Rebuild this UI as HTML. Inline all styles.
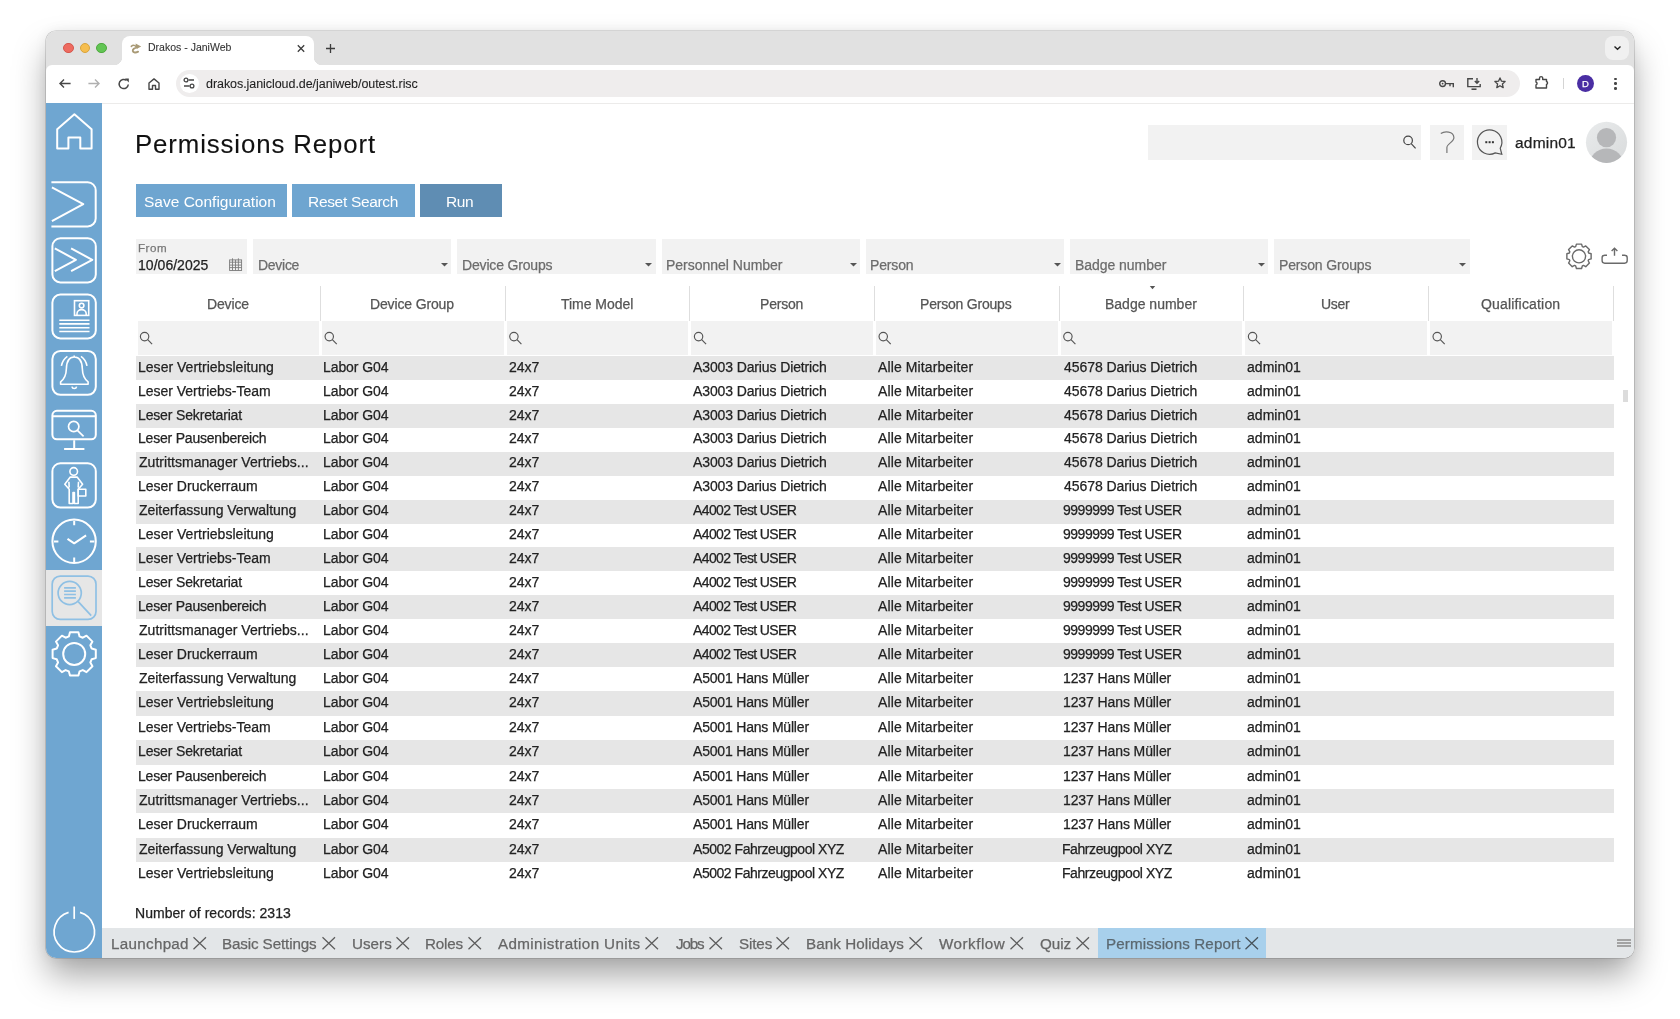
<!DOCTYPE html>
<html><head><meta charset="utf-8"><title>Permissions Report</title>
<style>
*{box-sizing:border-box;margin:0;padding:0}
html,body{width:1680px;height:1019px;overflow:hidden;background:#fff;font-family:"Liberation Sans",sans-serif}
#win{position:absolute;left:46px;top:30.5px;width:1588px;height:927.5px;border-radius:10px;overflow:hidden;background:#fff;
 box-shadow:0 0 0 0.6px rgba(0,0,0,0.22),0 19px 34px -2px rgba(0,0,0,0.36),0 0 14px rgba(0,0,0,0.06)}
#pg{position:absolute;left:-46px;top:-30.5px;width:1680px;height:1019px}
.b{position:absolute}
.t{position:absolute;white-space:nowrap;line-height:1;will-change:transform;-webkit-text-stroke:0.25px currentColor}
svg{position:absolute;overflow:visible}
</style></head>
<body>
<div id="win"><div id="pg">
<div class="b" style="left:0.00px;top:0.00px;width:1680.00px;height:72.00px;background:#e1e1e1"></div><div class="b" style="left:121.70px;top:36.00px;width:192.60px;height:28.50px;background:#fff;border-radius:8px 8px 0 0"></div><div class="b" style="left:113.70px;top:56.50px;width:8.00px;height:8.00px;background:radial-gradient(circle at 0 0,transparent 8px,#fff 8.5px)"></div><div class="b" style="left:314.30px;top:56.50px;width:8.00px;height:8.00px;background:radial-gradient(circle at 100% 0,transparent 8px,#fff 8.5px)"></div><div class="b" style="left:63.30px;top:42.50px;width:10.40px;height:10.40px;background:#ee6b60;border-radius:50%;border:0.6px solid #d5574d"></div><div class="b" style="left:79.70px;top:42.50px;width:10.40px;height:10.40px;background:#f6be4f;border-radius:50%;border:0.6px solid #d9a43c"></div><div class="b" style="left:96.40px;top:42.50px;width:10.40px;height:10.40px;background:#62c554;border-radius:50%;border:0.6px solid #4fa93f"></div><div class="t" style="left:147.90px;top:42.10px;font-size:10.5px;color:#333;letter-spacing:0.007px;-webkit-text-stroke:0.1px currentColor">Drakos - JaniWeb</div><svg style="left:0;top:0" width="1680" height="100" viewBox="0 0 1680 100"><g fill="none" stroke="#a99a76" stroke-linecap="round"><path stroke-width="1.5" d="M131.3 46.4 C132.6 45.1 134.6 45.1 136.2 46.6"/><path stroke-width="1.9" d="M137.3 47.6 C134.2 47.7 132.5 49.5 132.8 51.1 C133.2 52.7 135.9 52.9 138.1 51.7"/></g><path fill="#a99a76" d="M135.6 43.6 L141.2 46.6 L137.4 48.6 L135.8 46.8 Z"/></svg><svg style="left:297px;top:45px" width="8" height="7" viewBox="0 0 8 7"><path d="M0.8 0.3 L7.2 6.7 M7.2 0.3 L0.8 6.7" stroke="#3c3c3c" stroke-width="1.3"/></svg><svg style="left:326.4px;top:43.9px" width="9" height="9" viewBox="0 0 9 9"><path d="M4.5 0 V9 M0 4.5 H9" stroke="#3c3c3c" stroke-width="1.3"/></svg><div class="b" style="left:1605.30px;top:36.20px;width:23.40px;height:23.60px;background:#f0f0f0;border-radius:8px"></div><svg style="left:1613.5px;top:45.6px" width="7" height="4" viewBox="0 0 7 4"><path d="M0.5 0.5 L3.5 3.3 L6.5 0.5" fill="none" stroke="#222" stroke-width="1.4"/></svg><div class="b" style="left:46.00px;top:64.50px;width:1588.00px;height:38.00px;background:#fff;border-radius:6px 6px 0 0"></div><div class="b" style="left:0.00px;top:102.50px;width:1680.00px;height:0.90px;background:#ecebea"></div><svg style="left:58.8px;top:79.4px" width="12" height="9" viewBox="0 0 12 9"><path d="M11.6 4.5 H1 M5 0.6 L1 4.5 L5 8.4" fill="none" stroke="#474747" stroke-width="1.4"/></svg><svg style="left:88px;top:79.4px" width="12" height="9" viewBox="0 0 12 9"><path d="M0.4 4.5 H11 M7 0.6 L11 4.5 L7 8.4" fill="none" stroke="#b0b0b0" stroke-width="1.4"/></svg><svg style="left:118.4px;top:78px" width="12" height="12" viewBox="0 0 12 12"><path d="M10.3 6.5 A4.6 4.6 0 1 1 8.6 2.4" fill="none" stroke="#474747" stroke-width="1.5"/><path d="M7 0.6 H10.8 V4.4 Z" fill="#474747"/></svg><svg style="left:148px;top:77.5px" width="12" height="12" viewBox="0 0 12 12"><path d="M1 11.3 V5 L6 0.9 L11 5 V11.3 H7.5 V7.5 H4.5 V11.3 Z" fill="none" stroke="#474747" stroke-width="1.4" stroke-linejoin="round"/></svg><div class="b" style="left:175.50px;top:69.60px;width:1344.00px;height:27.90px;background:#efeded;border-radius:14px"></div><div class="b" style="left:179.50px;top:73.60px;width:19.00px;height:19.00px;background:#fff;border-radius:50%"></div><svg style="left:183px;top:77px" width="12" height="12" viewBox="0 0 12 12"><path d="M5.5 3 H11 M1 9 H6.5" stroke="#474747" stroke-width="1.4"/><circle cx="3" cy="3" r="1.9" fill="none" stroke="#474747" stroke-width="1.3"/><circle cx="9" cy="9" r="1.9" fill="none" stroke="#474747" stroke-width="1.3"/></svg><div class="t" style="left:206.20px;top:78.00px;font-size:12.5px;color:#1f1f1f;letter-spacing:-0.058px;-webkit-text-stroke:0.1px currentColor">drakos.janicloud.de/janiweb/outest.risc</div><svg style="left:1439.4px;top:80px" width="15" height="8" viewBox="0 0 15 8"><circle cx="3.6" cy="3.6" r="2.9" fill="none" stroke="#474747" stroke-width="1.4"/><circle cx="3.6" cy="3.6" r="0.9" fill="#474747"/><path d="M6.5 3.6 H14.3 V7.3 M11 3.6 V6.3" fill="none" stroke="#474747" stroke-width="1.4"/></svg><svg style="left:1466.9px;top:77.5px" width="14" height="12" viewBox="0 0 14 12"><path d="M6 0.8 H0.8 V8.6 H13.2 V6" fill="none" stroke="#474747" stroke-width="1.4"/><path d="M4.5 11.2 H9.5" stroke="#474747" stroke-width="1.6"/><path d="M10 0 V5 M7.8 3 L10 5.2 L12.2 3" fill="none" stroke="#474747" stroke-width="1.4"/></svg><svg style="left:1494px;top:77.3px" width="12" height="12" viewBox="0 0 12 12"><path d="M6 0.9 L7.5 4.2 L11.1 4.5 L8.4 6.9 L9.2 10.6 L6 8.7 L2.8 10.6 L3.6 6.9 L0.9 4.5 L4.5 4.2 Z" fill="none" stroke="#474747" stroke-width="1.3" stroke-linejoin="round"/></svg><svg style="left:1535px;top:76.4px" width="15" height="13" viewBox="0 0 15 13"><path d="M1 3.5 H4.5 V2.2 A1.6 1.6 0 0 1 7.7 2.2 V3.5 H11.5 V5.5 A1.6 1.6 0 0 1 11.5 8.5 V12 H1 V9 A1.6 1.6 0 0 0 1 6 Z" fill="none" stroke="#474747" stroke-width="1.4" stroke-linejoin="round"/></svg><div class="b" style="left:1563.20px;top:77.70px;width:1.00px;height:11.80px;background:#d4d4d4"></div><div class="b" style="left:1577.30px;top:75.20px;width:16.80px;height:16.80px;background:#4a2ea3;border-radius:50%"></div><div class="t" style="left:1581.90px;top:78.60px;font-size:9.5px;color:#fff;">D</div><div class="b" style="left:1614.20px;top:77.55px;width:2.50px;height:2.50px;background:#474747;border-radius:50%"></div><div class="b" style="left:1614.20px;top:82.35px;width:2.50px;height:2.50px;background:#474747;border-radius:50%"></div><div class="b" style="left:1614.20px;top:87.05px;width:2.50px;height:2.50px;background:#474747;border-radius:50%"></div><div class="b" style="left:46.00px;top:103.30px;width:56.40px;height:854.70px;background:#6fa6d1"></div><div class="b" style="left:46.00px;top:570.00px;width:56.40px;height:55.80px;background:#e6e6e6"></div><div class="t" style="left:135.40px;top:131.80px;font-size:25.8px;color:#111;letter-spacing:0.882px;-webkit-text-stroke:0.1px currentColor">Permissions Report</div><div class="b" style="left:135.60px;top:184.00px;width:151.10px;height:33.20px;background:#6ea5d0"></div><div class="t" style="left:144.20px;top:194.30px;font-size:15.5px;color:#fff;-webkit-text-stroke:0">Save Configuration</div><div class="b" style="left:292.20px;top:184.00px;width:122.70px;height:33.20px;background:#6ea5d0"></div><div class="t" style="left:307.60px;top:194.30px;font-size:15.5px;color:#fff;letter-spacing:-0.318px;-webkit-text-stroke:0">Reset Search</div><div class="b" style="left:420.10px;top:184.00px;width:81.70px;height:33.20px;background:#5f8db3"></div><div class="t" style="left:446.10px;top:194.30px;font-size:15.5px;color:#fff;letter-spacing:-0.450px;-webkit-text-stroke:0">Run</div><div class="b" style="left:1148.20px;top:125.30px;width:272.60px;height:34.30px;background:#f2f2f2"></div><div class="b" style="left:1429.60px;top:125.30px;width:34.40px;height:34.30px;background:#f2f2f2"></div><div class="b" style="left:1472.40px;top:125.30px;width:34.60px;height:34.30px;background:#f2f2f2"></div><div class="t" style="left:1514.50px;top:135.40px;font-size:15.5px;color:#222;letter-spacing:0.200px;">admin01</div><div class="b" style="left:136.00px;top:239.00px;width:111.10px;height:34.60px;background:#f2f2f2"></div><div class="t" style="left:137.60px;top:242.00px;font-size:11.6px;color:#777;letter-spacing:0.500px;">From</div><div class="t" style="left:138.10px;top:257.70px;font-size:14px;color:#222;letter-spacing:0.033px;">10/06/2025</div><div class="b" style="left:253.10px;top:239.00px;width:198.40px;height:34.60px;background:#f2f2f2"></div><div class="t" style="left:257.60px;top:257.60px;font-size:14px;color:#6c6c6c;letter-spacing:-0.280px;">Device</div><svg style="left:441.20px;top:262.7px" width="7" height="4" viewBox="0 0 7 4"><path d="M0 0 H7 L3.5 3.5 Z" fill="#555"/></svg><div class="b" style="left:457.30px;top:239.00px;width:198.40px;height:34.60px;background:#f2f2f2"></div><div class="t" style="left:461.80px;top:257.60px;font-size:14px;color:#6c6c6c;letter-spacing:-0.167px;">Device Groups</div><svg style="left:645.40px;top:262.7px" width="7" height="4" viewBox="0 0 7 4"><path d="M0 0 H7 L3.5 3.5 Z" fill="#555"/></svg><div class="b" style="left:661.60px;top:239.00px;width:198.40px;height:34.60px;background:#f2f2f2"></div><div class="t" style="left:666.10px;top:257.60px;font-size:14px;color:#6c6c6c;letter-spacing:-0.013px;">Personnel Number</div><svg style="left:849.70px;top:262.7px" width="7" height="4" viewBox="0 0 7 4"><path d="M0 0 H7 L3.5 3.5 Z" fill="#555"/></svg><div class="b" style="left:865.80px;top:239.00px;width:198.40px;height:34.60px;background:#f2f2f2"></div><div class="t" style="left:870.30px;top:257.60px;font-size:14px;color:#6c6c6c;letter-spacing:-0.160px;">Person</div><svg style="left:1053.90px;top:262.7px" width="7" height="4" viewBox="0 0 7 4"><path d="M0 0 H7 L3.5 3.5 Z" fill="#555"/></svg><div class="b" style="left:1070.10px;top:239.00px;width:198.40px;height:34.60px;background:#f2f2f2"></div><div class="t" style="left:1074.60px;top:257.60px;font-size:14px;color:#6c6c6c;letter-spacing:-0.045px;">Badge number</div><svg style="left:1258.20px;top:262.7px" width="7" height="4" viewBox="0 0 7 4"><path d="M0 0 H7 L3.5 3.5 Z" fill="#555"/></svg><div class="b" style="left:1274.40px;top:239.00px;width:195.30px;height:34.60px;background:#f2f2f2"></div><div class="t" style="left:1278.90px;top:257.60px;font-size:14px;color:#6c6c6c;letter-spacing:-0.142px;">Person Groups</div><svg style="left:1459.40px;top:262.7px" width="7" height="4" viewBox="0 0 7 4"><path d="M0 0 H7 L3.5 3.5 Z" fill="#555"/></svg><div class="t" style="left:206.78px;top:296.70px;font-size:14px;color:#555;letter-spacing:-0.140px;">Device</div><div class="b" style="left:320.16px;top:286.00px;width:1.00px;height:35.00px;background:#dedede"></div><div class="b" style="left:137.50px;top:321.00px;width:181.66px;height:34.00px;background:#f2f2f2"></div><div class="t" style="left:370.39px;top:296.70px;font-size:14px;color:#555;letter-spacing:-0.145px;">Device Group</div><div class="b" style="left:504.82px;top:286.00px;width:1.00px;height:35.00px;background:#dedede"></div><div class="b" style="left:322.16px;top:321.00px;width:181.66px;height:34.00px;background:#f2f2f2"></div><div class="t" style="left:561.40px;top:296.70px;font-size:14px;color:#555;letter-spacing:-0.033px;">Time Model</div><div class="b" style="left:689.48px;top:286.00px;width:1.00px;height:35.00px;background:#dedede"></div><div class="b" style="left:506.82px;top:321.00px;width:181.66px;height:34.00px;background:#f2f2f2"></div><div class="t" style="left:759.91px;top:296.70px;font-size:14px;color:#555;letter-spacing:-0.200px;">Person</div><div class="b" style="left:874.14px;top:286.00px;width:1.00px;height:35.00px;background:#dedede"></div><div class="b" style="left:691.48px;top:321.00px;width:181.66px;height:34.00px;background:#f2f2f2"></div><div class="t" style="left:920.32px;top:296.70px;font-size:14px;color:#555;letter-spacing:-0.208px;">Person Groups</div><div class="b" style="left:1058.80px;top:286.00px;width:1.00px;height:35.00px;background:#dedede"></div><div class="b" style="left:876.14px;top:321.00px;width:181.66px;height:34.00px;background:#f2f2f2"></div><div class="t" style="left:1104.73px;top:296.70px;font-size:14px;color:#555;">Badge number</div><div class="b" style="left:1243.46px;top:286.00px;width:1.00px;height:35.00px;background:#dedede"></div><div class="b" style="left:1060.80px;top:321.00px;width:181.66px;height:34.00px;background:#f2f2f2"></div><div class="t" style="left:1320.89px;top:296.70px;font-size:14px;color:#555;letter-spacing:-0.333px;">User</div><div class="b" style="left:1428.12px;top:286.00px;width:1.00px;height:35.00px;background:#dedede"></div><div class="b" style="left:1245.46px;top:321.00px;width:181.66px;height:34.00px;background:#f2f2f2"></div><div class="t" style="left:1481.00px;top:296.70px;font-size:14px;color:#555;letter-spacing:0.175px;">Qualification</div><div class="b" style="left:1612.78px;top:286.00px;width:1.00px;height:35.00px;background:#dedede"></div><div class="b" style="left:1430.12px;top:321.00px;width:181.66px;height:34.00px;background:#f2f2f2"></div><div class="b" style="left:136.00px;top:355.80px;width:1478.00px;height:23.96px;background:#e6e6e6"></div><div class="t" style="left:138.40px;top:359.60px;font-size:14px;color:#222;letter-spacing:0.019px;">Leser Vertriebsleitung</div><div class="t" style="left:323.06px;top:359.60px;font-size:14px;color:#222;letter-spacing:-0.088px;">Labor G04</div><div class="t" style="left:508.52px;top:359.60px;font-size:14px;color:#222;">24x7</div><div class="t" style="left:693.38px;top:359.60px;font-size:14px;color:#222;letter-spacing:-0.120px;">A3003 Darius Dietrich</div><div class="t" style="left:878.04px;top:359.60px;font-size:14px;color:#222;letter-spacing:0.113px;">Alle Mitarbeiter</div><div class="t" style="left:1063.50px;top:359.60px;font-size:14px;color:#222;letter-spacing:-0.065px;">45678 Darius Dietrich</div><div class="t" style="left:1246.96px;top:359.60px;font-size:14px;color:#222;letter-spacing:0.033px;">admin01</div><div class="t" style="left:138.40px;top:383.56px;font-size:14px;color:#222;letter-spacing:-0.021px;">Leser Vertriebs-Team</div><div class="t" style="left:323.06px;top:383.56px;font-size:14px;color:#222;letter-spacing:-0.088px;">Labor G04</div><div class="t" style="left:508.52px;top:383.56px;font-size:14px;color:#222;">24x7</div><div class="t" style="left:693.38px;top:383.56px;font-size:14px;color:#222;letter-spacing:-0.120px;">A3003 Darius Dietrich</div><div class="t" style="left:878.04px;top:383.56px;font-size:14px;color:#222;letter-spacing:0.113px;">Alle Mitarbeiter</div><div class="t" style="left:1063.50px;top:383.56px;font-size:14px;color:#222;letter-spacing:-0.065px;">45678 Darius Dietrich</div><div class="t" style="left:1246.96px;top:383.56px;font-size:14px;color:#222;letter-spacing:0.033px;">admin01</div><div class="b" style="left:136.00px;top:403.72px;width:1478.00px;height:23.96px;background:#e6e6e6"></div><div class="t" style="left:138.40px;top:407.52px;font-size:14px;color:#222;letter-spacing:-0.156px;">Leser Sekretariat</div><div class="t" style="left:323.06px;top:407.52px;font-size:14px;color:#222;letter-spacing:-0.088px;">Labor G04</div><div class="t" style="left:508.52px;top:407.52px;font-size:14px;color:#222;">24x7</div><div class="t" style="left:693.38px;top:407.52px;font-size:14px;color:#222;letter-spacing:-0.120px;">A3003 Darius Dietrich</div><div class="t" style="left:878.04px;top:407.52px;font-size:14px;color:#222;letter-spacing:0.113px;">Alle Mitarbeiter</div><div class="t" style="left:1063.50px;top:407.52px;font-size:14px;color:#222;letter-spacing:-0.065px;">45678 Darius Dietrich</div><div class="t" style="left:1246.96px;top:407.52px;font-size:14px;color:#222;letter-spacing:0.033px;">admin01</div><div class="t" style="left:138.40px;top:431.48px;font-size:14px;color:#222;letter-spacing:-0.206px;">Leser Pausenbereich</div><div class="t" style="left:323.06px;top:431.48px;font-size:14px;color:#222;letter-spacing:-0.088px;">Labor G04</div><div class="t" style="left:508.52px;top:431.48px;font-size:14px;color:#222;">24x7</div><div class="t" style="left:693.38px;top:431.48px;font-size:14px;color:#222;letter-spacing:-0.120px;">A3003 Darius Dietrich</div><div class="t" style="left:878.04px;top:431.48px;font-size:14px;color:#222;letter-spacing:0.113px;">Alle Mitarbeiter</div><div class="t" style="left:1063.50px;top:431.48px;font-size:14px;color:#222;letter-spacing:-0.065px;">45678 Darius Dietrich</div><div class="t" style="left:1246.96px;top:431.48px;font-size:14px;color:#222;letter-spacing:0.033px;">admin01</div><div class="b" style="left:136.00px;top:451.64px;width:1478.00px;height:23.96px;background:#e6e6e6"></div><div class="t" style="left:139.40px;top:455.44px;font-size:14px;color:#222;letter-spacing:0.026px;">Zutrittsmanager Vertriebs...</div><div class="t" style="left:323.06px;top:455.44px;font-size:14px;color:#222;letter-spacing:-0.088px;">Labor G04</div><div class="t" style="left:508.52px;top:455.44px;font-size:14px;color:#222;">24x7</div><div class="t" style="left:693.38px;top:455.44px;font-size:14px;color:#222;letter-spacing:-0.120px;">A3003 Darius Dietrich</div><div class="t" style="left:878.04px;top:455.44px;font-size:14px;color:#222;letter-spacing:0.113px;">Alle Mitarbeiter</div><div class="t" style="left:1063.50px;top:455.44px;font-size:14px;color:#222;letter-spacing:-0.065px;">45678 Darius Dietrich</div><div class="t" style="left:1246.96px;top:455.44px;font-size:14px;color:#222;letter-spacing:0.033px;">admin01</div><div class="t" style="left:138.40px;top:479.40px;font-size:14px;color:#222;letter-spacing:-0.006px;">Leser Druckerraum</div><div class="t" style="left:323.06px;top:479.40px;font-size:14px;color:#222;letter-spacing:-0.088px;">Labor G04</div><div class="t" style="left:508.52px;top:479.40px;font-size:14px;color:#222;">24x7</div><div class="t" style="left:693.38px;top:479.40px;font-size:14px;color:#222;letter-spacing:-0.120px;">A3003 Darius Dietrich</div><div class="t" style="left:878.04px;top:479.40px;font-size:14px;color:#222;letter-spacing:0.113px;">Alle Mitarbeiter</div><div class="t" style="left:1063.50px;top:479.40px;font-size:14px;color:#222;letter-spacing:-0.065px;">45678 Darius Dietrich</div><div class="t" style="left:1246.96px;top:479.40px;font-size:14px;color:#222;letter-spacing:0.033px;">admin01</div><div class="b" style="left:136.00px;top:499.56px;width:1478.00px;height:23.96px;background:#e6e6e6"></div><div class="t" style="left:139.40px;top:503.36px;font-size:14px;color:#222;letter-spacing:-0.030px;">Zeiterfassung Verwaltung</div><div class="t" style="left:323.06px;top:503.36px;font-size:14px;color:#222;letter-spacing:-0.088px;">Labor G04</div><div class="t" style="left:508.52px;top:503.36px;font-size:14px;color:#222;">24x7</div><div class="t" style="left:693.38px;top:503.36px;font-size:14px;color:#222;letter-spacing:-0.621px;">A4002 Test USER</div><div class="t" style="left:878.04px;top:503.36px;font-size:14px;color:#222;letter-spacing:0.113px;">Alle Mitarbeiter</div><div class="t" style="left:1062.50px;top:503.36px;font-size:14px;color:#222;letter-spacing:-0.475px;">9999999 Test USER</div><div class="t" style="left:1246.96px;top:503.36px;font-size:14px;color:#222;letter-spacing:0.033px;">admin01</div><div class="t" style="left:138.40px;top:527.32px;font-size:14px;color:#222;letter-spacing:0.019px;">Leser Vertriebsleitung</div><div class="t" style="left:323.06px;top:527.32px;font-size:14px;color:#222;letter-spacing:-0.088px;">Labor G04</div><div class="t" style="left:508.52px;top:527.32px;font-size:14px;color:#222;">24x7</div><div class="t" style="left:693.38px;top:527.32px;font-size:14px;color:#222;letter-spacing:-0.621px;">A4002 Test USER</div><div class="t" style="left:878.04px;top:527.32px;font-size:14px;color:#222;letter-spacing:0.113px;">Alle Mitarbeiter</div><div class="t" style="left:1062.50px;top:527.32px;font-size:14px;color:#222;letter-spacing:-0.475px;">9999999 Test USER</div><div class="t" style="left:1246.96px;top:527.32px;font-size:14px;color:#222;letter-spacing:0.033px;">admin01</div><div class="b" style="left:136.00px;top:547.48px;width:1478.00px;height:23.96px;background:#e6e6e6"></div><div class="t" style="left:138.40px;top:551.28px;font-size:14px;color:#222;letter-spacing:-0.021px;">Leser Vertriebs-Team</div><div class="t" style="left:323.06px;top:551.28px;font-size:14px;color:#222;letter-spacing:-0.088px;">Labor G04</div><div class="t" style="left:508.52px;top:551.28px;font-size:14px;color:#222;">24x7</div><div class="t" style="left:693.38px;top:551.28px;font-size:14px;color:#222;letter-spacing:-0.621px;">A4002 Test USER</div><div class="t" style="left:878.04px;top:551.28px;font-size:14px;color:#222;letter-spacing:0.113px;">Alle Mitarbeiter</div><div class="t" style="left:1062.50px;top:551.28px;font-size:14px;color:#222;letter-spacing:-0.475px;">9999999 Test USER</div><div class="t" style="left:1246.96px;top:551.28px;font-size:14px;color:#222;letter-spacing:0.033px;">admin01</div><div class="t" style="left:138.40px;top:575.24px;font-size:14px;color:#222;letter-spacing:-0.156px;">Leser Sekretariat</div><div class="t" style="left:323.06px;top:575.24px;font-size:14px;color:#222;letter-spacing:-0.088px;">Labor G04</div><div class="t" style="left:508.52px;top:575.24px;font-size:14px;color:#222;">24x7</div><div class="t" style="left:693.38px;top:575.24px;font-size:14px;color:#222;letter-spacing:-0.621px;">A4002 Test USER</div><div class="t" style="left:878.04px;top:575.24px;font-size:14px;color:#222;letter-spacing:0.113px;">Alle Mitarbeiter</div><div class="t" style="left:1062.50px;top:575.24px;font-size:14px;color:#222;letter-spacing:-0.475px;">9999999 Test USER</div><div class="t" style="left:1246.96px;top:575.24px;font-size:14px;color:#222;letter-spacing:0.033px;">admin01</div><div class="b" style="left:136.00px;top:595.40px;width:1478.00px;height:23.96px;background:#e6e6e6"></div><div class="t" style="left:138.40px;top:599.20px;font-size:14px;color:#222;letter-spacing:-0.206px;">Leser Pausenbereich</div><div class="t" style="left:323.06px;top:599.20px;font-size:14px;color:#222;letter-spacing:-0.088px;">Labor G04</div><div class="t" style="left:508.52px;top:599.20px;font-size:14px;color:#222;">24x7</div><div class="t" style="left:693.38px;top:599.20px;font-size:14px;color:#222;letter-spacing:-0.621px;">A4002 Test USER</div><div class="t" style="left:878.04px;top:599.20px;font-size:14px;color:#222;letter-spacing:0.113px;">Alle Mitarbeiter</div><div class="t" style="left:1062.50px;top:599.20px;font-size:14px;color:#222;letter-spacing:-0.475px;">9999999 Test USER</div><div class="t" style="left:1246.96px;top:599.20px;font-size:14px;color:#222;letter-spacing:0.033px;">admin01</div><div class="t" style="left:139.40px;top:623.16px;font-size:14px;color:#222;letter-spacing:0.026px;">Zutrittsmanager Vertriebs...</div><div class="t" style="left:323.06px;top:623.16px;font-size:14px;color:#222;letter-spacing:-0.088px;">Labor G04</div><div class="t" style="left:508.52px;top:623.16px;font-size:14px;color:#222;">24x7</div><div class="t" style="left:693.38px;top:623.16px;font-size:14px;color:#222;letter-spacing:-0.621px;">A4002 Test USER</div><div class="t" style="left:878.04px;top:623.16px;font-size:14px;color:#222;letter-spacing:0.113px;">Alle Mitarbeiter</div><div class="t" style="left:1062.50px;top:623.16px;font-size:14px;color:#222;letter-spacing:-0.475px;">9999999 Test USER</div><div class="t" style="left:1246.96px;top:623.16px;font-size:14px;color:#222;letter-spacing:0.033px;">admin01</div><div class="b" style="left:136.00px;top:643.32px;width:1478.00px;height:23.96px;background:#e6e6e6"></div><div class="t" style="left:138.40px;top:647.12px;font-size:14px;color:#222;letter-spacing:-0.006px;">Leser Druckerraum</div><div class="t" style="left:323.06px;top:647.12px;font-size:14px;color:#222;letter-spacing:-0.088px;">Labor G04</div><div class="t" style="left:508.52px;top:647.12px;font-size:14px;color:#222;">24x7</div><div class="t" style="left:693.38px;top:647.12px;font-size:14px;color:#222;letter-spacing:-0.621px;">A4002 Test USER</div><div class="t" style="left:878.04px;top:647.12px;font-size:14px;color:#222;letter-spacing:0.113px;">Alle Mitarbeiter</div><div class="t" style="left:1062.50px;top:647.12px;font-size:14px;color:#222;letter-spacing:-0.475px;">9999999 Test USER</div><div class="t" style="left:1246.96px;top:647.12px;font-size:14px;color:#222;letter-spacing:0.033px;">admin01</div><div class="t" style="left:139.40px;top:671.08px;font-size:14px;color:#222;letter-spacing:-0.030px;">Zeiterfassung Verwaltung</div><div class="t" style="left:323.06px;top:671.08px;font-size:14px;color:#222;letter-spacing:-0.088px;">Labor G04</div><div class="t" style="left:508.52px;top:671.08px;font-size:14px;color:#222;">24x7</div><div class="t" style="left:693.38px;top:671.08px;font-size:14px;color:#222;letter-spacing:-0.188px;">A5001 Hans Müller</div><div class="t" style="left:878.04px;top:671.08px;font-size:14px;color:#222;letter-spacing:0.113px;">Alle Mitarbeiter</div><div class="t" style="left:1062.50px;top:671.08px;font-size:14px;color:#222;letter-spacing:-0.100px;">1237 Hans Müller</div><div class="t" style="left:1246.96px;top:671.08px;font-size:14px;color:#222;letter-spacing:0.033px;">admin01</div><div class="b" style="left:136.00px;top:691.24px;width:1478.00px;height:24.43px;background:#e6e6e6"></div><div class="t" style="left:138.40px;top:695.27px;font-size:14px;color:#222;letter-spacing:0.019px;">Leser Vertriebsleitung</div><div class="t" style="left:323.06px;top:695.27px;font-size:14px;color:#222;letter-spacing:-0.088px;">Labor G04</div><div class="t" style="left:508.52px;top:695.27px;font-size:14px;color:#222;">24x7</div><div class="t" style="left:693.38px;top:695.27px;font-size:14px;color:#222;letter-spacing:-0.188px;">A5001 Hans Müller</div><div class="t" style="left:878.04px;top:695.27px;font-size:14px;color:#222;letter-spacing:0.113px;">Alle Mitarbeiter</div><div class="t" style="left:1062.50px;top:695.27px;font-size:14px;color:#222;letter-spacing:-0.100px;">1237 Hans Müller</div><div class="t" style="left:1246.96px;top:695.27px;font-size:14px;color:#222;letter-spacing:0.033px;">admin01</div><div class="t" style="left:138.40px;top:719.76px;font-size:14px;color:#222;letter-spacing:-0.021px;">Leser Vertriebs-Team</div><div class="t" style="left:323.06px;top:719.76px;font-size:14px;color:#222;letter-spacing:-0.088px;">Labor G04</div><div class="t" style="left:508.52px;top:719.76px;font-size:14px;color:#222;">24x7</div><div class="t" style="left:693.38px;top:719.76px;font-size:14px;color:#222;letter-spacing:-0.188px;">A5001 Hans Müller</div><div class="t" style="left:878.04px;top:719.76px;font-size:14px;color:#222;letter-spacing:0.113px;">Alle Mitarbeiter</div><div class="t" style="left:1062.50px;top:719.76px;font-size:14px;color:#222;letter-spacing:-0.100px;">1237 Hans Müller</div><div class="t" style="left:1246.96px;top:719.76px;font-size:14px;color:#222;letter-spacing:0.033px;">admin01</div><div class="b" style="left:136.00px;top:740.16px;width:1478.00px;height:24.43px;background:#e6e6e6"></div><div class="t" style="left:138.40px;top:744.19px;font-size:14px;color:#222;letter-spacing:-0.156px;">Leser Sekretariat</div><div class="t" style="left:323.06px;top:744.19px;font-size:14px;color:#222;letter-spacing:-0.088px;">Labor G04</div><div class="t" style="left:508.52px;top:744.19px;font-size:14px;color:#222;">24x7</div><div class="t" style="left:693.38px;top:744.19px;font-size:14px;color:#222;letter-spacing:-0.188px;">A5001 Hans Müller</div><div class="t" style="left:878.04px;top:744.19px;font-size:14px;color:#222;letter-spacing:0.113px;">Alle Mitarbeiter</div><div class="t" style="left:1062.50px;top:744.19px;font-size:14px;color:#222;letter-spacing:-0.100px;">1237 Hans Müller</div><div class="t" style="left:1246.96px;top:744.19px;font-size:14px;color:#222;letter-spacing:0.033px;">admin01</div><div class="t" style="left:138.40px;top:768.62px;font-size:14px;color:#222;letter-spacing:-0.206px;">Leser Pausenbereich</div><div class="t" style="left:323.06px;top:768.62px;font-size:14px;color:#222;letter-spacing:-0.088px;">Labor G04</div><div class="t" style="left:508.52px;top:768.62px;font-size:14px;color:#222;">24x7</div><div class="t" style="left:693.38px;top:768.62px;font-size:14px;color:#222;letter-spacing:-0.188px;">A5001 Hans Müller</div><div class="t" style="left:878.04px;top:768.62px;font-size:14px;color:#222;letter-spacing:0.113px;">Alle Mitarbeiter</div><div class="t" style="left:1062.50px;top:768.62px;font-size:14px;color:#222;letter-spacing:-0.100px;">1237 Hans Müller</div><div class="t" style="left:1246.96px;top:768.62px;font-size:14px;color:#222;letter-spacing:0.033px;">admin01</div><div class="b" style="left:136.00px;top:789.02px;width:1478.00px;height:24.43px;background:#e6e6e6"></div><div class="t" style="left:139.40px;top:793.05px;font-size:14px;color:#222;letter-spacing:0.026px;">Zutrittsmanager Vertriebs...</div><div class="t" style="left:323.06px;top:793.05px;font-size:14px;color:#222;letter-spacing:-0.088px;">Labor G04</div><div class="t" style="left:508.52px;top:793.05px;font-size:14px;color:#222;">24x7</div><div class="t" style="left:693.38px;top:793.05px;font-size:14px;color:#222;letter-spacing:-0.188px;">A5001 Hans Müller</div><div class="t" style="left:878.04px;top:793.05px;font-size:14px;color:#222;letter-spacing:0.113px;">Alle Mitarbeiter</div><div class="t" style="left:1062.50px;top:793.05px;font-size:14px;color:#222;letter-spacing:-0.100px;">1237 Hans Müller</div><div class="t" style="left:1246.96px;top:793.05px;font-size:14px;color:#222;letter-spacing:0.033px;">admin01</div><div class="t" style="left:138.40px;top:817.48px;font-size:14px;color:#222;letter-spacing:-0.006px;">Leser Druckerraum</div><div class="t" style="left:323.06px;top:817.48px;font-size:14px;color:#222;letter-spacing:-0.088px;">Labor G04</div><div class="t" style="left:508.52px;top:817.48px;font-size:14px;color:#222;">24x7</div><div class="t" style="left:693.38px;top:817.48px;font-size:14px;color:#222;letter-spacing:-0.188px;">A5001 Hans Müller</div><div class="t" style="left:878.04px;top:817.48px;font-size:14px;color:#222;letter-spacing:0.113px;">Alle Mitarbeiter</div><div class="t" style="left:1062.50px;top:817.48px;font-size:14px;color:#222;letter-spacing:-0.100px;">1237 Hans Müller</div><div class="t" style="left:1246.96px;top:817.48px;font-size:14px;color:#222;letter-spacing:0.033px;">admin01</div><div class="b" style="left:136.00px;top:837.88px;width:1478.00px;height:24.43px;background:#e6e6e6"></div><div class="t" style="left:139.40px;top:841.91px;font-size:14px;color:#222;letter-spacing:-0.030px;">Zeiterfassung Verwaltung</div><div class="t" style="left:323.06px;top:841.91px;font-size:14px;color:#222;letter-spacing:-0.088px;">Labor G04</div><div class="t" style="left:508.52px;top:841.91px;font-size:14px;color:#222;">24x7</div><div class="t" style="left:693.38px;top:841.91px;font-size:14px;color:#222;letter-spacing:-0.462px;">A5002 Fahrzeugpool XYZ</div><div class="t" style="left:878.04px;top:841.91px;font-size:14px;color:#222;letter-spacing:0.113px;">Alle Mitarbeiter</div><div class="t" style="left:1061.70px;top:841.91px;font-size:14px;color:#222;letter-spacing:-0.427px;">Fahrzeugpool XYZ</div><div class="t" style="left:1246.96px;top:841.91px;font-size:14px;color:#222;letter-spacing:0.033px;">admin01</div><div class="t" style="left:138.40px;top:866.34px;font-size:14px;color:#222;letter-spacing:0.019px;">Leser Vertriebsleitung</div><div class="t" style="left:323.06px;top:866.34px;font-size:14px;color:#222;letter-spacing:-0.088px;">Labor G04</div><div class="t" style="left:508.52px;top:866.34px;font-size:14px;color:#222;">24x7</div><div class="t" style="left:693.38px;top:866.34px;font-size:14px;color:#222;letter-spacing:-0.462px;">A5002 Fahrzeugpool XYZ</div><div class="t" style="left:878.04px;top:866.34px;font-size:14px;color:#222;letter-spacing:0.113px;">Alle Mitarbeiter</div><div class="t" style="left:1061.70px;top:866.34px;font-size:14px;color:#222;letter-spacing:-0.427px;">Fahrzeugpool XYZ</div><div class="t" style="left:1246.96px;top:866.34px;font-size:14px;color:#222;letter-spacing:0.033px;">admin01</div><div class="b" style="left:1623.00px;top:389.60px;width:5.00px;height:12.20px;background:#dcdcdc"></div><div class="t" style="left:135.00px;top:906.00px;font-size:14px;color:#222;letter-spacing:0.041px;">Number of records: 2313</div><div class="b" style="left:102.00px;top:928.00px;width:1578.00px;height:30.00px;background:#e3e6e8"></div><div class="b" style="left:1098.20px;top:928.00px;width:167.80px;height:30.00px;background:#a8d0ec"></div><div class="t" style="left:110.60px;top:935.60px;font-size:15.2px;color:#666;letter-spacing:0.300px;">Launchpad</div><svg style="left:192.90px;top:936.6px" width="13.5" height="12.5" viewBox="0 0 13.5 12.5"><path d="M0.5 0.3 L13 12.2 M13 0.3 L0.5 12.2" stroke="#5c5c5c" stroke-width="1.25"/></svg><div class="t" style="left:222.20px;top:935.60px;font-size:15.2px;color:#666;letter-spacing:-0.123px;">Basic Settings</div><svg style="left:322.30px;top:936.6px" width="13.5" height="12.5" viewBox="0 0 13.5 12.5"><path d="M0.5 0.3 L13 12.2 M13 0.3 L0.5 12.2" stroke="#5c5c5c" stroke-width="1.25"/></svg><div class="t" style="left:351.90px;top:935.60px;font-size:15.2px;color:#666;letter-spacing:0.025px;">Users</div><svg style="left:396.10px;top:936.6px" width="13.5" height="12.5" viewBox="0 0 13.5 12.5"><path d="M0.5 0.3 L13 12.2 M13 0.3 L0.5 12.2" stroke="#5c5c5c" stroke-width="1.25"/></svg><div class="t" style="left:425.40px;top:935.60px;font-size:15.2px;color:#666;letter-spacing:-0.200px;">Roles</div><svg style="left:468.10px;top:936.6px" width="13.5" height="12.5" viewBox="0 0 13.5 12.5"><path d="M0.5 0.3 L13 12.2 M13 0.3 L0.5 12.2" stroke="#5c5c5c" stroke-width="1.25"/></svg><div class="t" style="left:497.90px;top:935.60px;font-size:15.2px;color:#666;letter-spacing:0.374px;">Administration Units</div><svg style="left:645.30px;top:936.6px" width="13.5" height="12.5" viewBox="0 0 13.5 12.5"><path d="M0.5 0.3 L13 12.2 M13 0.3 L0.5 12.2" stroke="#5c5c5c" stroke-width="1.25"/></svg><div class="t" style="left:675.60px;top:935.60px;font-size:15.2px;color:#666;letter-spacing:-1.200px;">Jobs</div><svg style="left:708.90px;top:936.6px" width="13.5" height="12.5" viewBox="0 0 13.5 12.5"><path d="M0.5 0.3 L13 12.2 M13 0.3 L0.5 12.2" stroke="#5c5c5c" stroke-width="1.25"/></svg><div class="t" style="left:738.60px;top:935.60px;font-size:15.2px;color:#666;letter-spacing:-0.125px;">Sites</div><svg style="left:776.20px;top:936.6px" width="13.5" height="12.5" viewBox="0 0 13.5 12.5"><path d="M0.5 0.3 L13 12.2 M13 0.3 L0.5 12.2" stroke="#5c5c5c" stroke-width="1.25"/></svg><div class="t" style="left:805.90px;top:935.60px;font-size:15.2px;color:#666;letter-spacing:0.067px;">Bank Holidays</div><svg style="left:909.30px;top:936.6px" width="13.5" height="12.5" viewBox="0 0 13.5 12.5"><path d="M0.5 0.3 L13 12.2 M13 0.3 L0.5 12.2" stroke="#5c5c5c" stroke-width="1.25"/></svg><div class="t" style="left:939.30px;top:935.60px;font-size:15.2px;color:#666;letter-spacing:0.500px;">Workflow</div><svg style="left:1009.90px;top:936.6px" width="13.5" height="12.5" viewBox="0 0 13.5 12.5"><path d="M0.5 0.3 L13 12.2 M13 0.3 L0.5 12.2" stroke="#5c5c5c" stroke-width="1.25"/></svg><div class="t" style="left:1039.60px;top:935.60px;font-size:15.2px;color:#666;letter-spacing:-0.033px;">Quiz</div><svg style="left:1075.70px;top:936.6px" width="13.5" height="12.5" viewBox="0 0 13.5 12.5"><path d="M0.5 0.3 L13 12.2 M13 0.3 L0.5 12.2" stroke="#5c5c5c" stroke-width="1.25"/></svg><div class="t" style="left:1105.80px;top:935.60px;font-size:15.2px;color:#5b6870;letter-spacing:0.112px;">Permissions Report</div><svg style="left:1245.40px;top:936.6px" width="13.5" height="12.5" viewBox="0 0 13.5 12.5"><path d="M0.5 0.3 L13 12.2 M13 0.3 L0.5 12.2" stroke="#46525a" stroke-width="1.25"/></svg><div class="b" style="left:1617.00px;top:939.40px;width:13.50px;height:1.50px;background:#a3a3a3"></div><div class="b" style="left:1617.00px;top:942.20px;width:13.50px;height:1.50px;background:#a3a3a3"></div><div class="b" style="left:1617.00px;top:945.00px;width:13.50px;height:1.50px;background:#a3a3a3"></div><svg style="left:0;top:0" width="1680" height="1019" viewBox="0 0 1680 1019"><path fill="none" stroke="#fff" stroke-width="2" stroke-linejoin="round" d="M57.2 148.5 V129.2 L74.4 114.2 L91.6 129.2 V148.5 H80.3 V137.6 H68.4 V148.5 Z"/><path fill="none" stroke="#fff" stroke-width="2" stroke-linejoin="round" d="M51.4 182.3 H87.7 A8 8 0 0 1 95.7 190.3 V218.4 A8 8 0 0 1 87.7 226.4 H51.4"/><path fill="none" stroke="#fff" stroke-width="2" stroke-linejoin="round" d="M51.9 187.4 L83.3 204.1 L51.9 221.1"/><rect fill="none" stroke="#fff" stroke-width="2" stroke-linejoin="round" x="52.4" y="238.3" width="43.4" height="44.1" rx="8"/><path fill="none" stroke="#fff" stroke-width="2" stroke-linejoin="round" d="M54.8 248.4 L75.9 259.8 L54.8 271.2 M71.1 248.4 L92.3 259.8 L71.1 271.2"/><rect fill="none" stroke="#fff" stroke-width="2" stroke-linejoin="round" x="52.4" y="294.6" width="43.4" height="43.8" rx="8"/><g fill="none" stroke="#fff" stroke-width="1.6"><rect x="74.5" y="300.7" width="14.2" height="14.7"/><circle cx="81.6" cy="305.6" r="2.3"/><path d="M77 315.3 V313.8 A4.6 4.2 0 0 1 86.2 313.8 V315.3"/><path d="M59.3 320.2 H89.5 M59.3 323.9 H89.5 M59.3 327.7 H89.5 M59.3 331.5 H89.5"/></g><rect fill="none" stroke="#fff" stroke-width="2" stroke-linejoin="round" x="52.4" y="350.9" width="43.4" height="43.9" rx="8"/><g fill="none" stroke="#fff" stroke-width="1.6" stroke-linejoin="round"><path d="M74.2 357 C68.2 357 66.6 362 66.4 368.5 C66.2 375 64.5 379 60.6 381.8 V384.3 H88.1 V381.8 C84.2 379 82.5 375 82.3 368.5 C82.1 362 80.5 357 74.2 357 Z M74.2 355.4 V357"/><path d="M71.9 386.6 A2.4 2.4 0 0 0 76.6 386.6"/><path d="M61.4 365.9 Q62.6 359.6 67.4 356.3 M81 356.3 Q85.8 359.6 87 365.9"/></g><rect fill="none" stroke="#fff" stroke-width="2" stroke-linejoin="round" x="52.4" y="410.8" width="43.4" height="28.5" rx="4.5"/><path fill="none" stroke="#fff" stroke-width="2" stroke-linejoin="round" d="M52.4 416.3 H95.8 M74.2 440.3 V449 M64.1 449 H84.4"/><g fill="none" stroke="#fff" stroke-width="1.7"><circle cx="73.7" cy="426.5" r="5.2"/><path d="M77.4 430.4 L83.6 436.4"/></g><rect fill="none" stroke="#fff" stroke-width="2" stroke-linejoin="round" x="52.4" y="463.3" width="43.4" height="44.3" rx="8"/><g fill="none" stroke="#fff" stroke-width="1.6" stroke-linejoin="round"><circle cx="73.7" cy="471.4" r="3.8"/><path d="M70.3 477.1 H77.1 L82.6 484.2 L78.2 489.2 V503.5 H74.4 V492.5 H73 V503.5 H69.2 V489.2 L64.8 484.2 Z M68.9 481.8 L69.2 487.5 M78.5 481.8 L78.2 487.5"/><rect x="78.2" y="489.2" width="7.6" height="6.8"/></g><circle fill="none" stroke="#fff" stroke-width="2" stroke-linejoin="round" cx="74.1" cy="541.3" r="21.7"/><path fill="none" stroke="#fff" stroke-width="2" stroke-linejoin="round" d="M74.2 520.7 V525.2 M74.2 557.5 V562.2 M53.9 541.6 H58.4 M89.9 541.6 H94.4 M67.5 538.8 L74.2 543.3 L86.1 535.4"/><g fill="none" stroke="#8fc0e4" stroke-width="1.7"><rect x="52.2" y="576.1" width="43.8" height="43.3" rx="8"/><circle cx="69.7" cy="593" r="11.6"/><path d="M78.2 601.6 L91.2 615.6"/><path d="M64.1 587.9 H75.9 M64.1 591.2 H75.9 M64.1 594.5 H75.9 M64.1 597.8 H75.9"/></g><path fill="none" stroke="#fff" stroke-width="2" stroke-linejoin="round" d="M68.85 636.40 L70.00 632.30 L78.40 632.30 L79.55 636.40 L82.79 637.74 L86.50 635.66 L92.44 641.60 L90.36 645.31 L91.70 648.55 L95.80 649.70 L95.80 658.10 L91.70 659.25 L90.36 662.49 L92.44 666.20 L86.50 672.14 L82.79 670.06 L79.55 671.40 L78.40 675.50 L70.00 675.50 L68.85 671.40 L65.61 670.06 L61.90 672.14 L55.96 666.20 L58.04 662.49 L56.70 659.25 L52.60 658.10 L52.60 649.70 L56.70 648.55 L58.04 645.31 L55.96 641.60 L61.90 635.66 L65.61 637.74 Z"/><circle fill="none" stroke="#fff" stroke-width="2" stroke-linejoin="round" cx="74.2" cy="653.9" r="11"/><g fill="none" stroke="#fff" stroke-width="1.7"><path d="M68.6 912.4 A20.2 20.2 0 1 0 80 912.4"/><path d="M74.2 906.5 V918.9"/></g><g fill="none" stroke="#444" stroke-width="1.2"><circle cx="1408.1" cy="140.4" r="4.3"/><path d="M1411.2 143.6 L1415.6 148.4"/></g><path fill="none" stroke="#777" stroke-width="1.2" d="M1440.8 133.6 C1444.5 131 1453.5 131 1453.9 137.5 C1454.2 142 1447 143.5 1446.9 147.5 V152.9"/><path fill="none" stroke="#555" stroke-width="1.2" d="M1500.2 148.2 A12.2 12.2 0 1 0 1495.3 152.9 L1501.8 154.3 Z"/><g fill="#333"><rect x="1485.3" y="141.2" width="2" height="2"/><rect x="1488.6" y="141.2" width="2" height="2"/><rect x="1491.9" y="141.2" width="2" height="2"/></g><defs><clipPath id="av"><circle cx="1606.5" cy="142.3" r="20.6"/></clipPath><linearGradient id="avg" x1="0" y1="0" x2="1" y2="1"><stop offset="0" stop-color="#e9ebec"/><stop offset="1" stop-color="#d9dbdc"/></linearGradient></defs><circle cx="1606.5" cy="142.3" r="20.6" fill="url(#avg)"/><g clip-path="url(#av)" fill="#b6b7b9"><circle cx="1606.5" cy="137.6" r="9.6"/><ellipse cx="1606.5" cy="165" rx="17" ry="16.5"/></g><g fill="none" stroke="#7a7a7a" stroke-width="0.9"><rect x="229.6" y="259.9" width="12" height="10.6"/><path d="M229.6 262.2 H241.6 M229.6 265.1 H241.6 M229.6 267.6 H241.6 M232.5 259.9 V270.5 M235.5 259.9 V270.5 M238.4 259.9 V270.5 M232.5 258.3 V260 M238.4 258.3 V260"/></g><g fill="none" stroke="#555" stroke-width="1.15"><circle cx="144.60" cy="336.6" r="4.2"/><path d="M147.70 339.7 L152.10 344.2"/></g><g fill="none" stroke="#555" stroke-width="1.15"><circle cx="329.26" cy="336.6" r="4.2"/><path d="M332.36 339.7 L336.76 344.2"/></g><g fill="none" stroke="#555" stroke-width="1.15"><circle cx="513.92" cy="336.6" r="4.2"/><path d="M517.02 339.7 L521.42 344.2"/></g><g fill="none" stroke="#555" stroke-width="1.15"><circle cx="698.58" cy="336.6" r="4.2"/><path d="M701.68 339.7 L706.08 344.2"/></g><g fill="none" stroke="#555" stroke-width="1.15"><circle cx="883.24" cy="336.6" r="4.2"/><path d="M886.34 339.7 L890.74 344.2"/></g><g fill="none" stroke="#555" stroke-width="1.15"><circle cx="1067.90" cy="336.6" r="4.2"/><path d="M1071.00 339.7 L1075.40 344.2"/></g><g fill="none" stroke="#555" stroke-width="1.15"><circle cx="1252.56" cy="336.6" r="4.2"/><path d="M1255.66 339.7 L1260.06 344.2"/></g><g fill="none" stroke="#555" stroke-width="1.15"><circle cx="1437.22" cy="336.6" r="4.2"/><path d="M1440.32 339.7 L1444.72 344.2"/></g><path fill="#555" d="M1149.8 286 H1155.2 L1152.5 289.2 Z"/><path fill="none" stroke="#6a6a6a" stroke-width="1.4" stroke-linejoin="round" d="M1575.68 246.66 L1576.42 244.17 L1581.58 244.17 L1582.32 246.66 L1583.47 247.13 L1585.75 245.90 L1589.40 249.55 L1588.17 251.83 L1588.64 252.98 L1591.13 253.72 L1591.13 258.88 L1588.64 259.62 L1588.17 260.77 L1589.40 263.05 L1585.75 266.70 L1583.47 265.47 L1582.32 265.94 L1581.58 268.43 L1576.42 268.43 L1575.68 265.94 L1574.53 265.47 L1572.25 266.70 L1568.60 263.05 L1569.83 260.77 L1569.36 259.62 L1566.87 258.88 L1566.87 253.72 L1569.36 252.98 L1569.83 251.83 L1568.60 249.55 L1572.25 245.90 L1574.53 247.13 Z"/><circle fill="none" stroke="#6a6a6a" stroke-width="1.4" cx="1579" cy="256.3" r="6.6"/><path fill="none" stroke="#6a6a6a" stroke-width="1.4" d="M1607 255.2 H1604.7 A2.6 2.6 0 0 0 1602.1 257.8 V260.6 A2.6 2.6 0 0 0 1604.7 263.2 H1624.6 A2.6 2.6 0 0 0 1627.2 260.6 V257.8 A2.6 2.6 0 0 0 1624.6 255.2 H1622 M1614.5 255.8 V248.5 M1611.6 251 L1614.5 248.2 L1617.4 251"/></svg>
</div></div>
</body></html>
